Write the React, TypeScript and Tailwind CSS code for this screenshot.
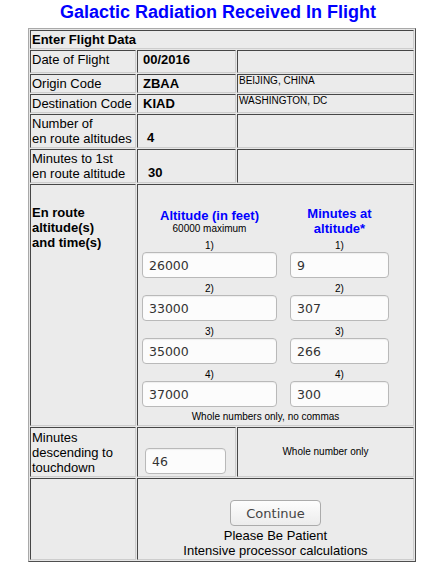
import React from "react";

const cell =
  "border border-t-[#464646] border-l-[#464646] border-r-[#cdcdcd] border-b-[#cdcdcd] bg-[#ebebeb] px-[1px]";

const field =
  "h-[26px] rounded-[4px] border border-[#b9b9b9] bg-[#fcfcfc] shadow-[inset_0_1px_1px_rgba(0,0,0,0.06)] pl-[6px] font-['DejaVu_Sans',sans-serif] text-[12.5px] text-[#333] outline-none";

const legs = [
  { alt: "26000", min: "9" },
  { alt: "33000", min: "307" },
  { alt: "35000", min: "266" },
  { alt: "37000", min: "300" },
];

export default function App() {
  return (
    <div className="min-h-[573px] w-[432px] bg-white font-['Liberation_Sans',Arial,sans-serif] text-black">
      <h1 className="h-[28px] pt-[2px] pl-[4px] text-center text-[18px] font-bold leading-[20px] text-[#0000ff]">
        Galactic Radiation Received In Flight
      </h1>

      <div className="ml-[28px] grid w-[388px] grid-cols-[106px_99px_177px] grid-rows-[19px_23px_19px_19px_34px_34px_242px_50px_82px] gap-[1px] border border-t-[#a9a9a9] border-l-[#a9a9a9] border-r-[#4f4f4f] border-b-[#4f4f4f] bg-[#e6e6e6] p-[1px] text-[13px] leading-[15px]">
        <div className={`${cell} col-span-3 flex items-center font-bold`}>Enter Flight Data</div>

        <div className={`${cell} pt-[1px]`}>Date of Flight</div>
        <div className={`${cell} pt-[1px] pl-[5px] font-bold`}>00/2016</div>
        <div className={cell}></div>

        <div className={`${cell} pt-[1px]`}>Origin Code</div>
        <div className={`${cell} pt-[1px] pl-[5px] font-bold`}>ZBAA</div>
        <div className={`${cell} text-[10px] leading-[12px]`}>BEIJING, CHINA</div>

        <div className={`${cell} pt-[1px]`}>Destination Code</div>
        <div className={`${cell} pt-[1px] pl-[5px] font-bold`}>KIAD</div>
        <div className={`${cell} text-[10px] leading-[12px]`}>WASHINGTON, DC</div>

        <div className={`${cell} flex items-center`}>
          <div>
            Number of
            <br />
            en route altitudes
          </div>
        </div>
        <div className={`${cell} flex items-end pb-[2px] pl-[9px] font-bold`}>4</div>
        <div className={cell}></div>

        <div className={`${cell} flex items-center`}>
          <div>
            Minutes to 1st
            <br />
            en route altitude
          </div>
        </div>
        <div className={`${cell} flex items-end pb-[2px] pl-[10px] font-bold`}>30</div>
        <div className={cell}></div>

        <div className={`${cell} pt-[20px] font-bold`}>
          En route
          <br />
          altitude(s)
          <br />
          and time(s)
        </div>
        <div className={`${cell} col-span-2 pt-[21px] pl-[4px]`}>
          <div className="flex w-[247px] gap-[13px]">
            <div className="flex w-[135px] flex-col">
              <div className="flex h-[30px] flex-col items-center justify-center">
                <div className="font-bold text-[#0000ff]">Altitude (in feet)</div>
                <div className="text-[10px] leading-[11.5px]">60000 maximum</div>
              </div>
              {legs.map((l, i) => (
                <div key={i} className={i === 0 ? "mt-[3px]" : "mt-[4px]"}>
                  <div className="h-[13px] text-center text-[10px] leading-[13px]">{i + 1})</div>
                  <input defaultValue={l.alt} className={`${field} w-[135px]`} />
                </div>
              ))}
            </div>
            <div className="flex w-[99px] flex-col">
              <div className="h-[30px] text-center font-bold text-[#0000ff]">
                Minutes at
                <br />
                altitude*
              </div>
              {legs.map((l, i) => (
                <div key={i} className={i === 0 ? "mt-[3px]" : "mt-[4px]"}>
                  <div className="h-[13px] text-center text-[10px] leading-[13px]">{i + 1})</div>
                  <input defaultValue={l.min} className={`${field} w-[99px]`} />
                </div>
              ))}
            </div>
          </div>
          <div className="mt-[3px] w-[247px] text-center text-[10px] leading-[13px]">
            Whole numbers only, no commas
          </div>
        </div>

        <div className={`${cell} flex items-center`}>
          <div>Minutes descending to touchdown</div>
        </div>
        <div className={`${cell} flex items-end pb-[2px] pl-[7px]`}>
          <input defaultValue="46" className={`${field} w-[81px]`} />
        </div>
        <div className={`${cell} flex items-center justify-center text-[10px] leading-[12px]`}>
          Whole number only
        </div>

        <div className={cell}></div>
        <div className={`${cell} col-span-2 flex flex-col items-center pt-[21px]`}>
          <button className="h-[26px] w-[91px] rounded-[4px] border border-[#ababab] bg-linear-to-b from-[#fdfdfd] to-[#ececec] font-['DejaVu_Sans',sans-serif] text-[13px] text-[#444]">
            Continue
          </button>
          <div className="mt-[2px] text-center">
            Please Be Patient
            <br />
            Intensive processor calculations
          </div>
        </div>
      </div>
    </div>
  );
}
